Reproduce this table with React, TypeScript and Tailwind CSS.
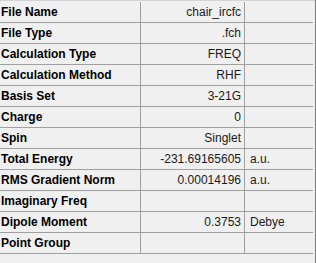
const rows: [string, string, string][] = [
  ["File Name", "chair_ircfc", ""],
  ["File Type", ".fch", ""],
  ["Calculation Type", "FREQ", ""],
  ["Calculation Method", "RHF", ""],
  ["Basis Set", "3-21G", ""],
  ["Charge", "0", ""],
  ["Spin", "Singlet", ""],
  ["Total Energy", "-231.69165605", "a.u."],
  ["RMS Gradient Norm", "0.00014196", "a.u."],
  ["Imaginary Freq", "", ""],
  ["Dipole Moment", "0.3753", "Debye"],
  ["Point Group", "", ""],
];

const App = () => {
  return (
    <div className="w-[316px] h-[263px] bg-[#f0f0f0] flex font-['Liberation_Sans',sans-serif]">
      <div className="w-[315px] border-t border-[#d4d4d4] pt-[1px]">
        {rows.map(([label, value, unit]) => (
          <div key={label} className="flex h-[21px] w-[313px] border-b border-[#a0a0a0]">
            <div className="w-[141px] border-r border-[#a0a0a0] pl-[1px] flex items-center font-bold text-[12px] text-black">
              {label}
            </div>
            <div className="w-[104px] border-r border-[#a0a0a0] pr-[3px] flex items-center justify-end text-[12px] text-[#1a1a1a]">
              {value}
            </div>
            <div className="flex-1 pl-[5px] flex items-center text-[12px] text-[#1a1a1a]">
              {unit}
            </div>
          </div>
        ))}
      </div>
      <div className="w-[1px] bg-[#787880]" />
    </div>
  );
};

export default App;
